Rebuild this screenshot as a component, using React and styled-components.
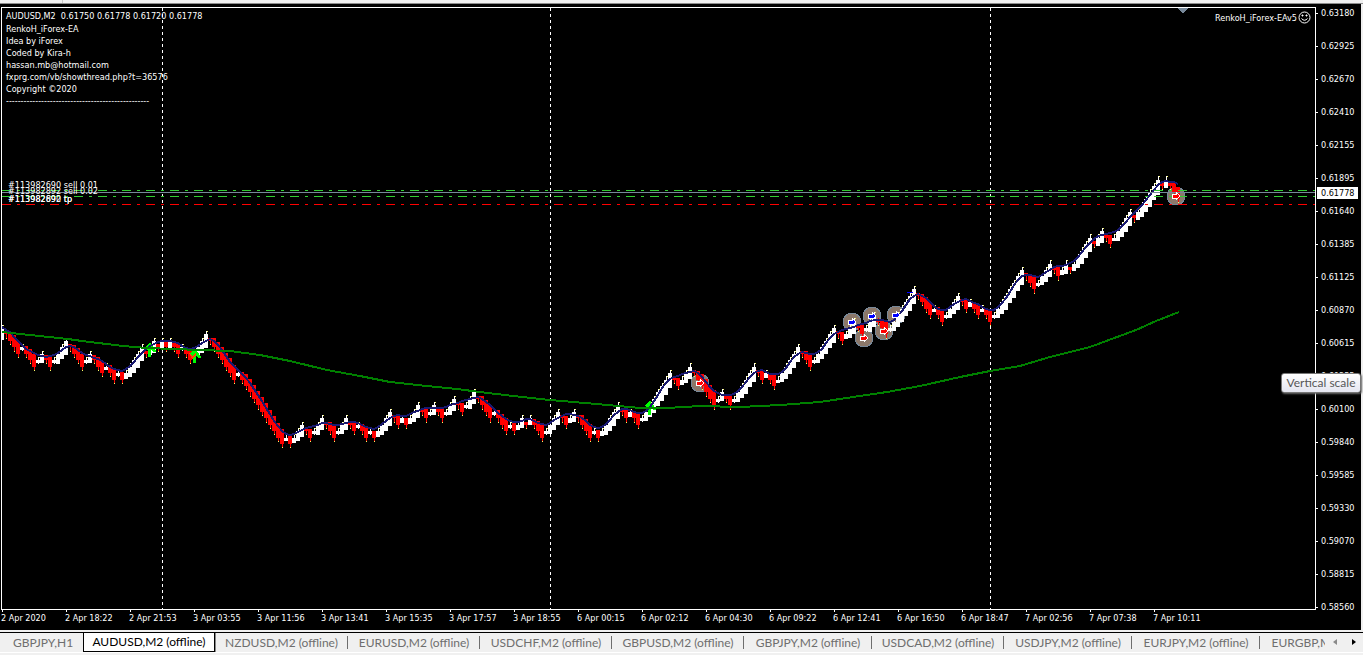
import React from 'react';
import styled, { createGlobalStyle } from 'styled-components';

const GlobalStyle = createGlobalStyle`
    body {
        margin: 0;
        background: #f0f0f0;
        overflow: hidden;
    }
`;

const CHART_FONT = "'DejaVu Sans Condensed', 'DejaVu Sans', sans-serif";
const UI_FONT = "Lato, 'Open Sans', sans-serif";

const Page = styled.div`
    display: flex;
    flex-direction: column;
    height: 100vh;
    background: #f0f0f0;
`;

const ToolbarEdge = styled.div`
    display: flex;
    height: 3px;
    flex: none;
    border-bottom: 1px solid #8c8c8c;
    background: linear-gradient(90deg, #f0f0f0 62px, #c8c8c8 62px, #c8c8c8 63px, #f0f0f0 63px);
`;

const ChartWindow = styled.main`
    flex: 1;
    min-height: 0;
    display: grid;
    grid-template-columns: minmax(0, 1fr) 45px;
    grid-template-rows: minmax(0, 1fr) 20px;
    margin-right: 2px;
    padding: 3px 0 0 1px;
    background: #000;
    color: #fff;
    font-family: ${CHART_FONT};
    font-size: 9px;
`;

const Plot = styled.section`
    position: relative;
    border: 1px solid #fff;
    overflow: hidden;
`;

const Canvas = styled.svg`
    display: block;
    width: 100%;
    height: 100%;
`;

const Comment = styled.div`
    position: absolute;
    top: 2px;
    left: 4px;
    line-height: 12px;
    white-space: pre;
`;

const Quote = styled.div`
    margin-bottom: 1px;
`;

const Expert = styled.div`
    position: absolute;
    top: 3px;
    right: 4px;
    display: flex;
    align-items: center;
    gap: 1px;
    line-height: 12px;
`;

const PriceAxis = styled.aside`
    position: relative;
    display: flex;
    flex-direction: column;
    justify-content: space-between;
    min-height: 0;
    margin-bottom: -3px;
`;

const Price = styled.div`
    display: flex;
    align-items: center;
    gap: 3px;
    height: 12px;
    line-height: 12px;

    &::before {
        content: '';
        width: 2px;
        height: 1px;
        background: #fff;
    }
`;

const CurrentPrice = styled.div`
    position: absolute;
    top: 180px;
    left: 1px;
    right: 3px;
    padding-left: 4px;
    line-height: 12px;
    background: #fff;
    color: #000;
`;

const Tooltip = styled.div`
    position: absolute;
    top: 366px;
    right: 0;
    box-sizing: border-box;
    width: 80px;
    height: 20px;
    border: 1px solid #767676;
    border-radius: 3px;
    background: linear-gradient(#fff, #e4e5f0);
    box-shadow: 1px 1px 2px #666;
    color: #575757;
    font: 12px/18px ${UI_FONT};
    text-align: center;
    white-space: nowrap;
`;

const TimeAxis = styled.div`
    display: flex;
    overflow: hidden;
`;

const Time = styled.div`
    flex: none;
    width: 64px;
    line-height: 13px;
    white-space: nowrap;

    &::before {
        content: '';
        display: block;
        width: 1px;
        height: 2px;
        margin-left: 1px;
        background: #fff;
    }
`;

const TabBar = styled.nav`
    flex: none;
    display: flex;
    align-items: flex-start;
    height: 19px;
    margin-top: 2px;
    border-top: 1px solid #000;
    border-bottom: 1px solid #fff;
    margin-bottom: 2px;
    font-family: ${UI_FONT};
`;

const TabList = styled.div`
    flex: 1;
    min-width: 0;
    display: flex;
    overflow: hidden;
    padding-left: 3px;
`;

const Tab = styled.button`
    flex: none;
    box-sizing: border-box;
    width: ${p => p.$width}px;
    height: 19px;
    padding: 0;
    border: 0;
    background: ${p => (p.$active ? '#fff' : 'linear-gradient(#6e6e6e, #6e6e6e) right 3px / 1px 13px no-repeat')};
    ${p => p.$plain && 'background: none;'}
    ${p => p.$active && 'border: 1px solid #000; border-top: 0; box-shadow: 1px 0 #888;'}
    color: ${p => (p.$active ? '#000' : '#6e6e6e')};
    font: 12px/18px ${UI_FONT};
    text-align: center;
    white-space: nowrap;
`;

const Scroll = styled.button`
    flex: none;
    width: 19px;
    height: 18px;
    padding: 0;
    border: 0;
    background: none;
    color: ${p => (p.disabled ? '#8a8a8a' : '#000')};

    svg {
        display: block;
        margin: auto;
    }
`;

const PRICES = [
    '0.63180', '0.62925', '0.62670', '0.62410', '0.62155', '0.61895', '0.61640',
    '0.61385', '0.61125', '0.60870', '0.60615', '0.60355', '0.60100', '0.59840',
    '0.59585', '0.59330', '0.59070', '0.58815', '0.58560',
];

const TIMES = [
    '2 Apr 2020', '2 Apr 18:22', '2 Apr 21:53', '3 Apr 03:55', '3 Apr 11:56',
    '3 Apr 13:41', '3 Apr 15:35', '3 Apr 17:57', '3 Apr 18:55', '6 Apr 00:15',
    '6 Apr 02:12', '6 Apr 04:30', '6 Apr 09:22', '6 Apr 12:41', '6 Apr 16:50',
    '6 Apr 18:47', '7 Apr 02:56', '7 Apr 07:38', '7 Apr 10:11',
];

const TABS = [
    { name: 'GBPJPY,H1', width: 80, plain: true },
    { name: 'AUDUSD,M2 (offline)', width: 132, active: true },
    { name: 'NZDUSD,M2 (offline)', width: 133 },
    { name: 'EURUSD,M2 (offline)', width: 132 },
    { name: 'USDCHF,M2 (offline)', width: 132 },
    { name: 'GBPUSD,M2 (offline)', width: 132 },
    { name: 'GBPJPY,M2 (offline)', width: 128 },
    { name: 'USDCAD,M2 (offline)', width: 132 },
    { name: 'USDJPY,M2 (offline)', width: 128 },
    { name: 'EURJPY,M2 (offline)', width: 128 },
    { name: 'EURGBP,M2 (offline)', width: 132 },
];

// renko runs: negative = falling bricks, positive = rising bricks
const RUNS = [
    -4, 1, -3, 2, -2, 4, -4, 2, -3, 1, -2, 1, -1, 5, -1, 2, -1, 1, -1, 1, -2, 1, -2, 4,
    -7, 1, -11, 1, -1, 3, -2, 3, -3, 3, -2, 1, -2, 1, -1, 4, -2, 1, -1, 3, -2, 2, -2, 3,
    -2, 3, -4, 1, -3, 1, -1, 2, -1, 1, -3, 4, -2, 2, -4, 1, -1, 5, -2, 1, -2, 8, -2, 3,
    -6, 2, -2, 6, -2, 1, -2, 6, -3, 6, -2, 3, -2, 3, -3, 7, -4, 1, -2, 4, -2, 1, -2, 1,
    -2, 8, -3, 4, -2, 2, -1, 5, -1, 2, -2, 5, -1, 6, -1, 1, -3,
];

const BRICK = 6.45;
const STEP = 4;

const buildCandles = () => {
    const mids = [328];
    const dirs = [1];
    RUNS.forEach(run => {
        const dir = Math.sign(run);
        for (let i = 0; i < Math.abs(run); i++) {
            mids.push(mids[mids.length - 1] - dir * BRICK);
            dirs.push(dir);
        }
    });
    let open = 338;
    return mids.map((mid, i) => {
        if (i > 0) open = (open + mids[i - 1]) / 2;
        return { x: 2 + i * STEP, mid, open, up: dirs[i] > 0 };
    });
};

const CANDLES = buildCandles();

// linear weighted average of the last 4 bricks, smoothed over its neighbours
const weighted = CANDLES.map((c, i) => (
    [4, 3, 2, 1].reduce((sum, w, j) => sum + w * CANDLES[Math.max(0, i - j)].mid, 0) / 10
));

const FAST = CANDLES.map((c, i) => {
    const near = weighted.slice(Math.max(0, i - 2), i + 3);
    const avg = near.reduce((a, b) => a + b, 0) / near.length;
    return `${c.x},${Math.round(avg - 4)}`;
}).join(' ');

const SLOW = '2,332 30,335 68,339 82,341 123,346 147,348 200,350 230,351 260,355 290,361 327,370 360,376 390,382 427,386 457,389 480,392 513,396 550,400 597,404 640,408 667,408 700,406 740,407 780,405 820,402 853,397 887,392 920,386 960,377 990,371 1020,366 1050,357 1090,347 1136,330 1156,321 1179,312';

const DEALS = [
    { x: 852, y: 322, color: '#0000ff' },
    { x: 872, y: 316, color: '#0000ff' },
    { x: 896, y: 315, color: '#0000ff' },
    { x: 864, y: 338, color: '#ff0000' },
    { x: 884, y: 331, color: '#ff0000' },
    { x: 700, y: 383, color: '#ff0000' },
    { x: 1176, y: 196, color: '#ff0000' },
];

const SIGNALS = [{ x: 150, y: 351 }, { x: 195, y: 357 }, { x: 650, y: 409 }];

const LEVELS = [
    { y: 190, color: '#32cd32', dash: '9 6 3 6' },
    { y: 192, color: '#778899' },
    { y: 196, color: '#32cd32', dash: '9 6 3 6' },
    { y: 204, color: '#ff0000', dash: '9 6 3 6' },
];

const Candle = ({ x, mid, open, up }) => {
    const color = up ? '#fff' : '#f00';
    const size = Math.abs(mid - open);
    const height = Math.round(size > 3 ? size + 2 : 3);
    const top = Math.round(up ? mid : mid - height);
    const tip = Math.round(up ? mid - BRICK / 2 : mid + BRICK / 2);
    return (
        <g>
            <rect x={x - 2} y={top} width="4" height={height} fill={color} />
            <rect x={x} y={Math.round(mid - BRICK / 2)} width="1" height="7" fill={color} />
            <rect x={x + (up ? 1 : 0)} y={tip} width="1" height="1" fill="#ffff66" />
        </g>
    );
};

const PriceChart = () => (
    <Canvas shapeRendering="crispEdges" aria-label="AUDUSD renko chart">
        <g transform="translate(-2 -8)">
            {[162, 550, 990].map(x => (
                <line key={x} x1={x + 0.5} x2={x + 0.5} y1="8" y2="102%" stroke="#fff" strokeDasharray="3 3" />
            ))}
            {DEALS.map(d => (
                <circle key={d.x} cx={d.x} cy={d.y} r="9" fill="#8c786a" stroke="#778899" />
            ))}
            {CANDLES.map(c => <Candle key={c.x} {...c} />)}
            {SIGNALS.map(s => (
                <path
                    key={s.x}
                    d={`M${s.x - 1} ${s.y + 6}v-11M${s.x - 4} ${s.y - 2}l4-4l5 7`}
                    fill="none"
                    stroke="#00ff00"
                    strokeWidth="3"
                />
            ))}
            <path d="M189 353l3 3l4-4v3l-4 4z" fill="#ff4500" />
            <polyline points={FAST} fill="none" stroke="#191970" strokeWidth="2" />
            <polyline points={SLOW} fill="none" stroke="#008000" strokeWidth="2" />
            {LEVELS.map(l => (
                <line key={l.y} x1="2" x2="101%" y1={l.y + 0.5} y2={l.y + 0.5} stroke={l.color} strokeDasharray={l.dash} />
            ))}
            {DEALS.map(d => (
                <path
                    key={d.x}
                    d={`M${d.x - 4} ${d.y - 2}h4v-2l4 4l-4 4v-2h-4z`}
                    fill={d.color}
                    stroke="#fff"
                />
            ))}
            <rect x="907" y="292" width="6" height="1" fill="#0000ff" />
            <path d="M1177 8h11l-5 5h-1z" fill="#778899" />
            <g fill="#fff">
                <text x="8" y="188">#113982690 sell 0.01</text>
                <text x="8" y="194">#113982892 sell 0.02</text>
                <text x="8" y="202">#113982690 tp</text>
                <text x="8" y="202">#113982892 tp</text>
            </g>
        </g>
    </Canvas>
);

const Smiley = () => (
    <svg width="13" height="13" viewBox="0 0 13 13" fill="none" stroke="#fff">
        <circle cx="6.5" cy="6.5" r="5.5" />
        <path d="M3.5 7.5q3 3.5 6 0" />
        <path d="M4 4h1v1h-1zM8 4h1v1h-1z" fill="#fff" />
    </svg>
);

const App = () => (
    <>
        <GlobalStyle />
        <Page>
            <ToolbarEdge />
            <ChartWindow>
                <Plot>
                    <PriceChart />
                    <Comment>
                        <Quote>{'AUDUSD,M2  0.61750 0.61778 0.61720 0.61778'}</Quote>
                        <div>RenkoH_iForex-EA</div>
                        <div>Idea by iForex</div>
                        <div>Coded by Kira-h</div>
                        <div>hassan.mb@hotmail.com</div>
                        <div>fxprg.com/vb/showthread.php?t=36576</div>
                        <div>Copyright ©2020</div>
                        <div>{'-'.repeat(49)}</div>
                    </Comment>
                    <Expert>RenkoH_iForex-EAv5<Smiley /></Expert>
                </Plot>
                <PriceAxis>
                    {PRICES.map(p => <Price key={p}>{p}</Price>)}
                    <CurrentPrice>0.61778</CurrentPrice>
                    <Tooltip role="tooltip">Vertical scale</Tooltip>
                </PriceAxis>
                <TimeAxis>
                    {TIMES.map(t => <Time key={t}>{t}</Time>)}
                </TimeAxis>
            </ChartWindow>
            <TabBar>
                <TabList>
                    {TABS.map(t => (
                        <Tab key={t.name} type="button" $width={t.width} $active={t.active} $plain={t.plain}>
                            {t.name}
                        </Tab>
                    ))}
                </TabList>
                <Scroll type="button" aria-label="Scroll left" disabled>
                    <svg width="4" height="6"><path d="M4 0v6l-4-3z" fill="currentColor" /></svg>
                </Scroll>
                <Scroll type="button" aria-label="Scroll right">
                    <svg width="4" height="6"><path d="M0 0v6l4-3z" fill="currentColor" /></svg>
                </Scroll>
            </TabBar>
        </Page>
    </>
);

export default App;
